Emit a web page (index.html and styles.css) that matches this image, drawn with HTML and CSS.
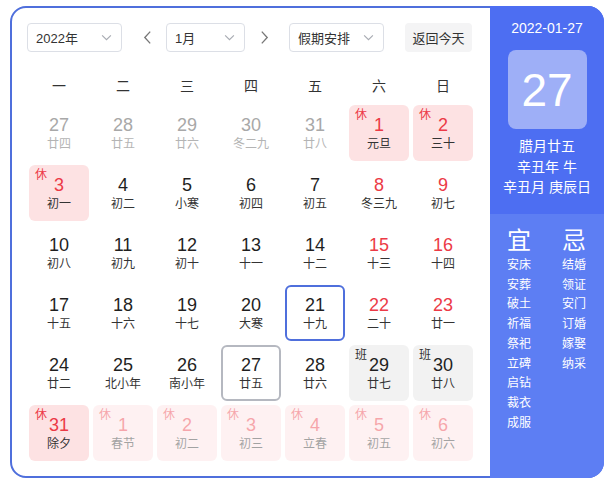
FILE: index.html
```html
<!DOCTYPE html>
<html lang="zh">
<head>
<meta charset="utf-8">
<link rel="stylesheet" href="styles.css">
</head>
<body>
<div class="cal">
  <div class="main">
    <div class="toolbar">
      <div class="select sel-year"><span>2022年</span><svg class="chev" viewBox="0 0 12 8"><path d="M1 1.5 L6 6.5 L11 1.5"/></svg></div>
      <div class="arrow arrow-prev"><svg viewBox="0 0 10 16"><path d="M8 1.5 L2 8 L8 14.5"/></svg></div>
      <div class="select sel-month"><span>1月</span><svg class="chev" viewBox="0 0 12 8"><path d="M1 1.5 L6 6.5 L11 1.5"/></svg></div>
      <div class="arrow arrow-next"><svg viewBox="0 0 10 16"><path d="M2 1.5 L8 8 L2 14.5"/></svg></div>
      <div class="select sel-hol"><span>假期安排</span><svg class="chev" viewBox="0 0 12 8"><path d="M1 1.5 L6 6.5 L11 1.5"/></svg></div>
      <div class="btn">返回今天</div>
    </div>
    <div class="weekdays">
      <span>一</span><span>二</span><span>三</span><span>四</span><span>五</span><span>六</span><span>日</span>
    </div>
    <div class="grid">
      <div class="cell other"><b>27</b><i>廿四</i></div>
      <div class="cell other"><b>28</b><i>廿五</i></div>
      <div class="cell other"><b>29</b><i>廿六</i></div>
      <div class="cell other"><b>30</b><i>冬二九</i></div>
      <div class="cell other"><b>31</b><i>廿八</i></div>
      <div class="cell rest"><em>休</em><b>1</b><i>元旦</i></div>
      <div class="cell rest"><em>休</em><b>2</b><i>三十</i></div>

      <div class="cell rest"><em>休</em><b>3</b><i>初一</i></div>
      <div class="cell"><b>4</b><i>初二</i></div>
      <div class="cell"><b>5</b><i>小寒</i></div>
      <div class="cell"><b>6</b><i>初四</i></div>
      <div class="cell"><b>7</b><i>初五</i></div>
      <div class="cell wkend"><b>8</b><i>冬三九</i></div>
      <div class="cell wkend"><b>9</b><i>初七</i></div>

      <div class="cell"><b>10</b><i>初八</i></div>
      <div class="cell"><b>11</b><i>初九</i></div>
      <div class="cell"><b>12</b><i>初十</i></div>
      <div class="cell"><b>13</b><i>十一</i></div>
      <div class="cell"><b>14</b><i>十二</i></div>
      <div class="cell wkend"><b>15</b><i>十三</i></div>
      <div class="cell wkend"><b>16</b><i>十四</i></div>

      <div class="cell"><b>17</b><i>十五</i></div>
      <div class="cell"><b>18</b><i>十六</i></div>
      <div class="cell"><b>19</b><i>十七</i></div>
      <div class="cell"><b>20</b><i>大寒</i></div>
      <div class="cell selected"><b>21</b><i>十九</i></div>
      <div class="cell wkend"><b>22</b><i>二十</i></div>
      <div class="cell wkend"><b>23</b><i>廿一</i></div>

      <div class="cell"><b>24</b><i>廿二</i></div>
      <div class="cell"><b>25</b><i>北小年</i></div>
      <div class="cell"><b>26</b><i>南小年</i></div>
      <div class="cell today"><b>27</b><i>廿五</i></div>
      <div class="cell"><b>28</b><i>廿六</i></div>
      <div class="cell work"><em>班</em><b>29</b><i>廿七</i></div>
      <div class="cell work"><em>班</em><b>30</b><i>廿八</i></div>

      <div class="cell rest"><em>休</em><b>31</b><i>除夕</i></div>
      <div class="cell rest faded"><em>休</em><b>1</b><i>春节</i></div>
      <div class="cell rest faded"><em>休</em><b>2</b><i>初二</i></div>
      <div class="cell rest faded"><em>休</em><b>3</b><i>初三</i></div>
      <div class="cell rest faded"><em>休</em><b>4</b><i>立春</i></div>
      <div class="cell rest faded"><em>休</em><b>5</b><i>初五</i></div>
      <div class="cell rest faded"><em>休</em><b>6</b><i>初六</i></div>
    </div>
  </div>
  <aside class="side">
    <div class="side-top">
      <div class="side-date">2022-01-27</div>
      <div class="big-day">27</div>
      <div class="lunar">
        <div>腊月廿五</div>
        <div>辛丑年 牛</div>
        <div>辛丑月 庚辰日</div>
      </div>
    </div>
    <div class="side-bottom">
      <div class="col">
        <div class="yj">宜</div>
        <div>安床</div><div>安葬</div><div>破土</div><div>祈福</div><div>祭祀</div><div>立碑</div><div>启钻</div><div>裁衣</div><div>成服</div>
      </div>
      <div class="col">
        <div class="yj">忌</div>
        <div>结婚</div><div>领证</div><div>安门</div><div>订婚</div><div>嫁娶</div><div>纳采</div>
      </div>
    </div>
  </aside>
</div>
</body>
</html>
```

FILE: styles.css
```css
* { box-sizing: border-box; }
html, body { margin: 0; padding: 0; background: #fff; }
body {
  font-family: "Liberation Sans", "Noto Sans CJK SC", sans-serif;
  color: #1f1f1f;
}
.cal {
  margin: 6px 0 0 10px;
  width: 594px;
  height: 472px;
  border: 2px solid #4f6fdc;
  border-radius: 16px;
  display: flex;
  background: #fff;
}
.main {
  flex: 1;
  padding: 15px 0 0 15px;
}
.toolbar {
  display: flex;
  align-items: center;
  height: 29px;
}
.toolbar > * { flex-shrink: 0; }
.select {
  height: 29px;
  border: 1px solid #dcdfe6;
  border-radius: 4px;
  display: flex;
  align-items: center;
  justify-content: space-between;
  padding: 0 9px 0 8px;
  font-size: 13px;
  color: #333;
}
.sel-year { width: 95px; }
.sel-month { width: 79px; margin-left: 9px; }
.sel-hol { width: 95px; margin-left: 15px; }
.chev { width: 11px; height: 7px; fill: none; stroke: #a8abb2; stroke-width: 1.3; }
.arrow { width: 20px; height: 29px; display: flex; align-items: center; justify-content: center; }
.arrow-prev { margin-left: 15px; }
.arrow-next { margin-left: 9px; }
.arrow svg { width: 9px; height: 15px; fill: none; stroke: #777; stroke-width: 1.5; }
.btn {
  margin-left: 21px;
  width: 67px;
  height: 29px;
  border-radius: 4px;
  background: #f4f4f5;
  font-size: 13px;
  color: #333;
  display: flex;
  align-items: center;
  justify-content: center;
}
.weekdays {
  display: grid;
  grid-template-columns: repeat(7, 60px);
  column-gap: 4px;
  padding-left: 2px;
  margin-top: 14px;
  height: 38px;
  align-items: center;
  font-size: 14px;
  color: #333;
}
.weekdays span { text-align: center; }
.grid {
  display: grid;
  grid-template-columns: repeat(7, 60px);
  grid-auto-rows: 56px;
  column-gap: 4px;
  row-gap: 4px;
  padding-left: 2px;
  margin-top: 1px;
}
.cell {
  position: relative;
  border-radius: 6px;
  display: flex;
  flex-direction: column;
  align-items: center;
  padding-top: 9px;
}
.cell b {
  font-weight: normal;
  font-size: 18px;
  line-height: 22px;
  color: #1f1f1f;
}
.cell i {
  font-style: normal;
  font-size: 12px;
  line-height: 16px;
  color: #333;
}
.cell em {
  position: absolute;
  left: 6px;
  top: 2px;
  font-style: normal;
  font-size: 12px;
  line-height: 16px;
}
.other b { color: #a8a8a8; }
.other i { color: #b4b4b4; }
.wkend b { color: #ec3a46; }
.rest { background: #fde2e3; }
.rest b { color: #ec3a46; }
.rest em { color: #ec3a46; }
.faded { opacity: 0.45; }
.work { background: #f2f2f2; }
.work em { color: #333; }
.selected { border: 2px solid #4f6fdc; padding-top: 7px; }
.today { border: 2px solid #b5b8c0; padding-top: 7px; }
.side {
  width: 114px;
  margin: -2px -2px -2px 0;
  border-radius: 0 16px 16px 0;
  overflow: hidden;
  display: flex;
  flex-direction: column;
  color: #fff;
}
.side-top {
  background: #4d6ef2;
  height: 208px;
  display: flex;
  flex-direction: column;
  align-items: center;
  padding-top: 13px;
}
.side-date { font-size: 14px; line-height: 18px; }
.big-day {
  margin-top: 13px;
  width: 79px;
  height: 79px;
  border-radius: 8px;
  background: #9eaff7;
  font-size: 46px;
  display: flex;
  align-items: center;
  justify-content: center;
}
.lunar {
  margin-top: 7px;
  font-size: 14px;
  line-height: 20.5px;
  text-align: center;
}
.side-bottom {
  flex: 1;
  background: #5d7ef3;
  display: flex;
  padding: 13px 0 0 17px;
  gap: 31px;
}
.col {
  font-size: 12px;
  line-height: 19.7px;
}
.yj {
  font-size: 24px;
  line-height: 28px;
  margin-bottom: 1px;
}
```
